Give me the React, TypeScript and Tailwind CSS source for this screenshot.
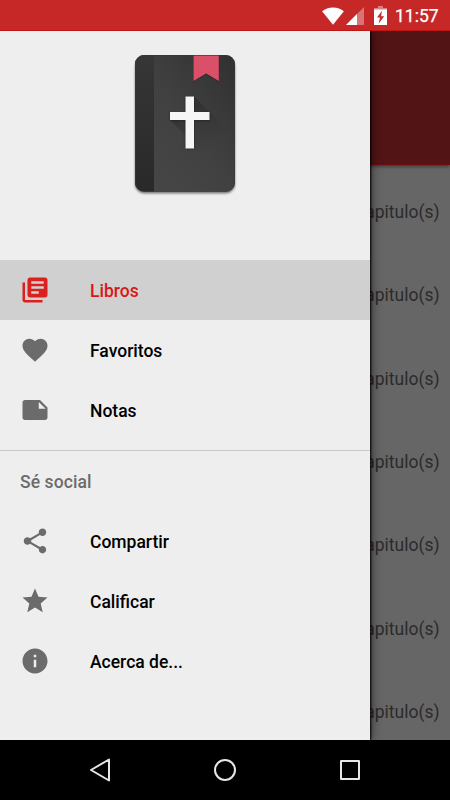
import type { ReactNode } from 'react'

type NavItem = {
  label: string
  path: string
}

const mainItems: NavItem[] = [
  {
    label: 'Libros',
    path: 'M4 6H2v14c0 1.1.9 2 2 2h14v-2H4V6zm16-4H8c-1.1 0-2 .9-2 2v12c0 1.1.9 2 2 2h12c1.1 0 2-.9 2-2V4c0-1.1-.9-2-2-2zm-1 9H9V9h10v2zm-4 4H9v-2h6v2zm4-8H9V5h10v2z',
  },
  {
    label: 'Favoritos',
    path: 'M12 21.35l-1.45-1.32C5.4 15.36 2 12.28 2 8.5 2 5.42 4.42 3 7.5 3c1.74 0 3.41.81 4.5 2.09C13.09 3.81 14.76 3 16.5 3 19.58 3 22 5.42 22 8.5c0 3.78-3.4 6.86-8.55 11.54L12 21.35z',
  },
  {
    label: 'Notas',
    path: 'M22 10l-6-6H4c-1.1 0-2 .9-2 2v12.01c0 1.1.9 1.99 2 1.99l16-.01c1.1 0 2-.89 2-1.99v-8zm-7-4.5l5.5 5.5H15V5.5z',
  },
]

const socialItems: NavItem[] = [
  {
    label: 'Compartir',
    path: 'M18 16.08c-.76 0-1.44.3-1.96.77L8.91 12.7c.05-.23.09-.46.09-.7s-.04-.47-.09-.7l7.05-4.11c.54.5 1.25.81 2.04.81 1.66 0 3-1.34 3-3s-1.34-3-3-3-3 1.34-3 3c0 .24.04.47.09.7L8.04 9.81C7.5 9.31 6.79 9 6 9c-1.66 0-3 1.34-3 3s1.34 3 3 3c.79 0 1.5-.31 2.04-.81l7.12 4.16c-.05.21-.08.43-.08.65 0 1.61 1.31 2.92 2.92 2.92s2.92-1.31 2.92-2.92-1.31-2.92-2.92-2.92z',
  },
  {
    label: 'Calificar',
    path: 'M12 17.27L18.18 21l-1.64-7.03L22 9.24l-7.19-.61L12 2 9.19 8.63 2 9.24l5.46 4.73L5.82 21z',
  },
  {
    label: 'Acerca de...',
    path: 'M12 2C6.48 2 2 6.48 2 12s4.48 10 10 10 10-4.48 10-10S17.52 2 12 2zm1 15h-2v-6h2v6zm0-8h-2V7h2v2z',
  },
]

const books = [1, 2, 3, 4, 5, 6, 7]

function StatusBar() {
  return (
    <div className="flex h-[31px] shrink-0 items-center justify-end border-b border-[#c01515] bg-[#c62828] pr-[10px] text-white">
      <svg className="mt-px h-[18px] w-[22px]" viewBox="0 0 22 18" fill="currentColor">
        <path d="M11 17.8L.1 4.2C3 1.9 6.7.5 11 .5s8 1.4 10.900 3.700z" />
      </svg>
      <svg className="mt-px ml-[2.500px] h-[18px] w-[18px]" viewBox="0 0 18 18" fill="currentColor">
        <path d="M0 18L18 0v18z" opacity=".35" />
        <path d="M0 18L11 7v11z" />
      </svg>
      <svg className="ml-[10px] h-[19px] w-[13px]" viewBox="0 0 13 19" fill="currentColor">
        <path d="M4 0h5v2h4v2H0V2h4z" opacity=".4" />
        <path fillRule="evenodd" d="M0 3.500h13V19H0zM8 4.700l-5 6.800h3L4.700 17.500l5.500-7.300H7.100z" />
      </svg>
      <span className="mt-[2px] ml-[8px] w-[45px] text-[17.5px] leading-[30px] whitespace-nowrap [-webkit-text-stroke:0.25px_white]">
        11:57
      </span>
    </div>
  )
}

function BibleLogo() {
  return (
    <svg className="h-[150px] w-[110px]" viewBox="0 0 110 150">
      <defs>
        <linearGradient id="cover" x1="0" y1="1" x2="1" y2="0">
          <stop offset="0" stopColor="#474747" />
          <stop offset=".5" stopColor="#414141" />
          <stop offset="1" stopColor="#303030" />
        </linearGradient>
        <linearGradient id="spine" x1="0" y1="0" x2="0" y2="1">
          <stop offset="0" stopColor="#363636" />
          <stop offset="1" stopColor="#292929" />
        </linearGradient>
        <linearGradient id="crossShade" gradientUnits="userSpaceOnUse" x1="50" y1="60" x2="84" y2="94">
          <stop offset="0" stopColor="#000" stopOpacity=".2" />
          <stop offset="1" stopColor="#000" stopOpacity="0" />
        </linearGradient>
        <clipPath id="book">
          <rect x="5" y="5" width="100" height="136.500" rx="9" />
        </clipPath>
        <filter id="soft" x="-10%" y="-10%" width="120%" height="120%">
          <feGaussianBlur stdDeviation="1.100" />
        </filter>
      </defs>
      <rect x="5" y="7.500" width="100" height="136" rx="9" fill="#000" opacity=".5" filter="url(#soft)" />
      <g clipPath="url(#book)">
        <rect x="5" y="5" width="100" height="137" fill="url(#cover)" />
        <rect x="5" y="5" width="19" height="137" fill="url(#spine)" />
        <path d="M64 46.500L105 87.500v55L84 118 64 98.500 55.500 98.500V85.500L40 70v-8h15.500z" fill="url(#crossShade)" />
        <path d="M63 5h26v26L76 23.500 63 31z" fill="#000" opacity=".25" transform="translate(0 1)" />
        <path d="M63.500 5h25.300v26l-12.700-7.500-12.600 7.500z" fill="#db5069" />
      </g>
      <rect x="5.500" y="5.500" width="99" height="136" rx="8.500" fill="none" stroke="#303a38" strokeOpacity=".65" />
      <path d="M55.500 47h8.500v15.500h15.500v8H64V99h-8.500V70.500H40v-8h15.500z" fill="#000" opacity=".4" filter="url(#soft)" />
      <path d="M55.500 46.500h8.500V62h15.500v8H64v28.500h-8.500V70H40v-8h15.500z" fill="#f5f5f5" />
    </svg>
  )
}

function NavRow({ item, active = false }: { item: NavItem; active?: boolean }) {
  return (
    <li
      className={
        active
          ? 'flex h-[60px] items-center gap-10 bg-[#d0d0d0] px-5 text-[#da1616]'
          : 'flex h-[60px] items-center gap-10 px-5 text-black'
      }
    >
      <svg
        className={active ? 'size-[30px] shrink-0 text-[#dc2020]' : 'size-[30px] shrink-0 text-[#6b6b6b]'}
        viewBox="0 0 24 24"
        fill="currentColor"
      >
        <path d={item.path} />
      </svg>
      <span className="pt-[3px] text-[17.5px] leading-none font-medium">{item.label}</span>
    </li>
  )
}

function Drawer() {
  return (
    <aside className="absolute inset-y-0 left-0 w-[370px] bg-[#eeeeee] shadow-[1px_0_2px_#000,2px_0_10px_rgba(0,0,0,0.45)]">
      <div className="flex h-[229px] justify-center pt-[19px]">
        <BibleLogo />
      </div>
      <ul>
        {mainItems.map((item, i) => (
          <NavRow key={item.label} item={item} active={i === 0} />
        ))}
      </ul>
      <div className="mt-[10px] h-px bg-[#c9c9c9]" />
      <h2 className="flex h-[60px] items-center px-5 pt-[2px] text-[17.5px] font-medium tracking-[0.1px] text-[#6b6b6b]">
        Sé social
      </h2>
      <ul>
        {socialItems.map((item) => (
          <NavRow key={item.label} item={item} />
        ))}
      </ul>
    </aside>
  )
}

function BookList() {
  return (
    <div className="flex h-full flex-col bg-[#666666]">
      <div className="z-0 h-[134px] shrink-0 border-b border-[#6d0c0c] bg-[#521414] shadow-[0_1px_4px_rgba(0,0,0,0.6)]" />
      <ul className="pt-[5.500px]">
        {books.map((n) => (
          <li
            key={n}
            className="flex h-[83.350px] items-center justify-end pr-[10.500px] text-[17.5px] text-[#2b2b2b]"
          >
            capitulo(s)
          </li>
        ))}
      </ul>
    </div>
  )
}

function NavButton({ children }: { children: ReactNode }) {
  return (
    <svg
      className="size-[30px]"
      viewBox="0 0 30 30"
      fill="none"
      stroke="#e6e6e6"
      strokeWidth="2"
      strokeLinejoin="round"
    >
      {children}
    </svg>
  )
}

export default function App() {
  return (
    <div className="flex h-[800px] w-[450px] flex-col overflow-hidden bg-black font-[Roboto,sans-serif]">
      <StatusBar />
      <main className="relative h-[709px] shrink-0 overflow-hidden">
        <BookList />
        <Drawer />
      </main>
      <nav className="flex h-[60px] items-center justify-between px-[85px]">
        <NavButton>
          <path d="M6 15L24 4.500v21z" />
        </NavButton>
        <NavButton>
          <circle cx="15" cy="15" r="10" />
        </NavButton>
        <NavButton>
          <rect x="6" y="6" width="18" height="18" />
        </NavButton>
      </nav>
    </div>
  )
}
